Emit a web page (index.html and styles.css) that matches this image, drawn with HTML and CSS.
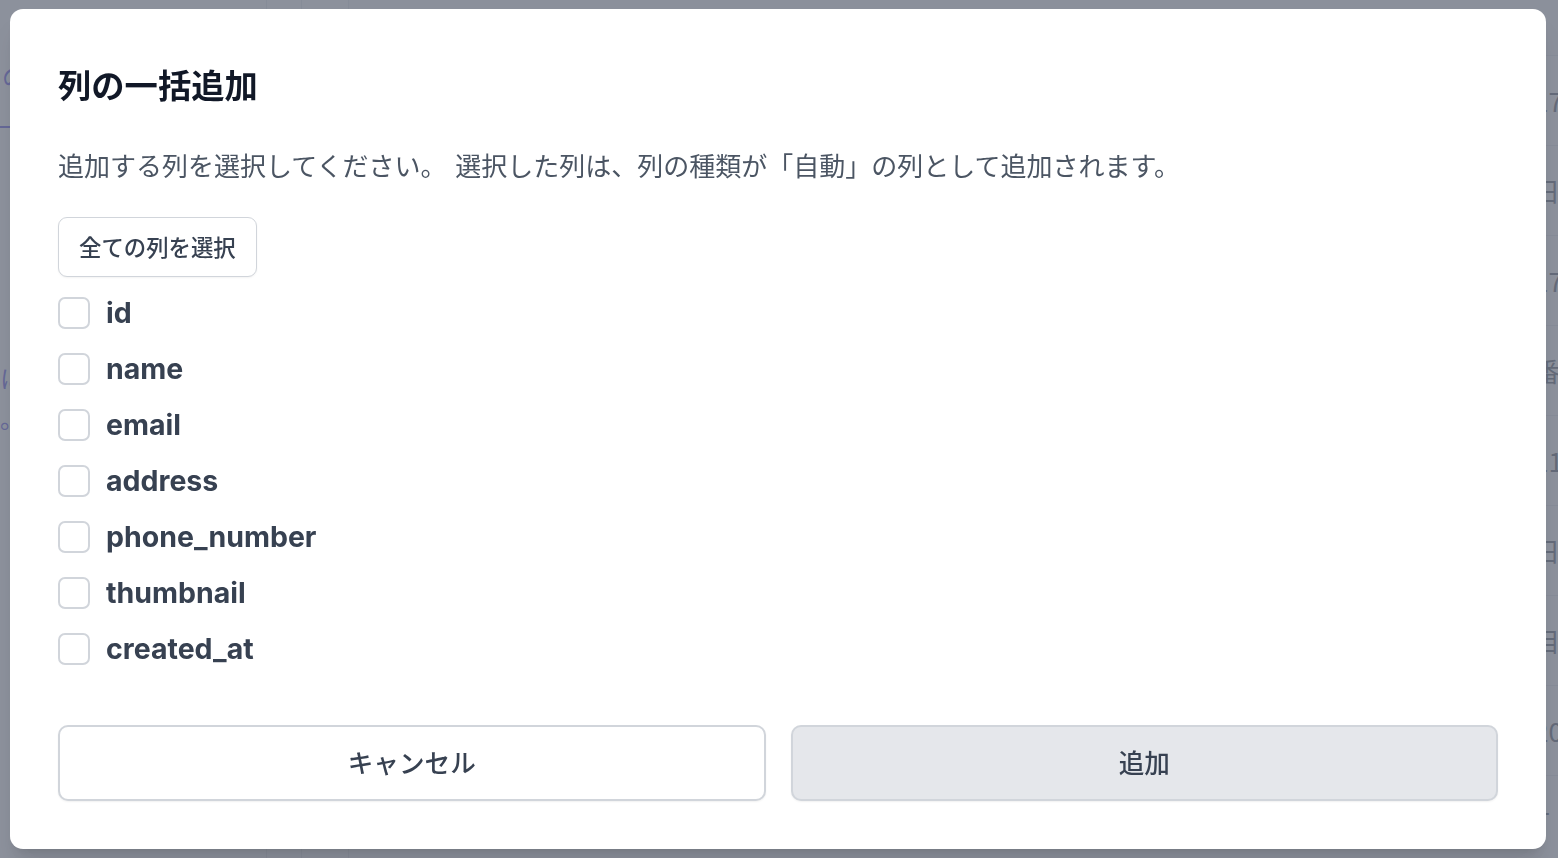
FILE: index.html
```html
<!DOCTYPE html>
<html lang="ja">
<head>
<meta charset="utf-8">
<title>列の一括追加</title>
<link rel="stylesheet" href="styles.css">
</head>
<body>
<div class="page">
  <aside class="side">
    <div class="side-tab">の</div>
    <div class="side-note">に</div>
    <div class="side-note small">。</div>
  </aside>
  <div class="col col-a"></div>
  <div class="col col-b"></div>
  <main class="table">
    <div class="row head"></div>
    <div class="row"><span class="cell-end">17</span></div>
    <div class="row"><span class="cell-end">日本</span></div>
    <div class="row"><span class="cell-end">17</span></div>
    <div class="row"><span class="cell-end">番号</span></div>
    <div class="row"><span class="cell-end">11</span></div>
    <div class="row"><span class="cell-end">日1</span></div>
    <div class="row"><span class="cell-end">目</span></div>
    <div class="row"><span class="cell-end">20</span></div>
    <div class="row"><span class="cell-end">T</span></div>
  </main>
</div>
<div class="overlay"></div>
<div class="modal" role="dialog">
  <h2 class="title">列の一括追加</h2>
  <p class="desc">追加する列を選択してください。 選択した列は、列の種類が「自動」の列として追加されます。</p>
  <div class="select-all-wrap"><button class="select-all">全ての列を選択</button></div>
  <ul class="cols">
    <li class="col-item"><span class="box"></span><span class="label">id</span></li>
    <li class="col-item"><span class="box"></span><span class="label">name</span></li>
    <li class="col-item"><span class="box"></span><span class="label">email</span></li>
    <li class="col-item"><span class="box"></span><span class="label">address</span></li>
    <li class="col-item"><span class="box"></span><span class="label">phone_number</span></li>
    <li class="col-item"><span class="box"></span><span class="label">thumbnail</span></li>
    <li class="col-item"><span class="box"></span><span class="label">created_at</span></li>
  </ul>
  <div class="footer">
    <button class="btn btn-cancel">キャンセル</button>
    <button class="btn btn-add">追加</button>
  </div>
</div>
</body>
</html>
```

FILE: styles.css
```css
* { box-sizing: border-box; }
html, body { margin: 0; padding: 0; }
body {
  font-family: "Inter", "Noto Sans CJK JP", sans-serif;
  background: #ffffff;
  width: 1558px;
  height: 858px;
  overflow: hidden;
}

/* page behind the dialog */
.page {
  display: grid;
  grid-template-columns: 267px 35px 47px 1fr;
  height: 858px;
  color: #374151;
}
.side { border-right: 1px solid #e5e7eb; font-family: "Noto Sans CJK JP", sans-serif; }
.side-tab {
  color: #4f46e5;
  font-size: 24px;
  line-height: 32px;
  padding: 60px 0 34px 2px;
  border-bottom: 2px solid #4f46e5;
}
.side-note { color: #4f46e5; font-size: 24px; line-height: 36px; padding-left: 0; margin-top: 232px; }
.side-note.small { margin-top: 4px; }
.col { border-right: 1px solid #e5e7eb; }
.table { display: flex; flex-direction: column; }
.row {
  height: 90px;
  border-bottom: 1px solid #e5e7eb;
  display: flex;
  align-items: center;
  justify-content: flex-end;
  font-family: "Noto Sans CJK JP", sans-serif;
  font-size: 26px;
}
.row.head { height: 56px; background: #f9fafb; }
.cell-end { width: 24px; white-space: nowrap; overflow: hidden; color: #4b5563; }

.overlay {
  position: fixed;
  inset: 0;
  background: rgba(107, 114, 128, 0.78);
}

/* dialog */
.modal {
  position: fixed;
  left: 10px;
  top: 9px;
  width: 1536px;
  height: 840px;
  background: #ffffff;
  border-radius: 13px;
  padding: 55px 48px 48px;
  display: flex;
  flex-direction: column;
  box-shadow: 0 20px 25px -5px rgba(0,0,0,0.1), 0 8px 10px -6px rgba(0,0,0,0.1);
}
.title {
  margin: 0;
  font-family: "Noto Sans CJK JP", sans-serif;
  font-size: 33.3px;
  line-height: 40px;
  font-weight: 600;
  color: #111827;
}
.desc {
  margin: 41px 0 0;
  font-family: "Noto Sans CJK JP", sans-serif;
  font-size: 26px;
  line-height: 40px;
  word-spacing: 3px;
  color: #4b5563;
}
.select-all-wrap { margin-top: 32px; display: flex; }
.select-all {
  height: 60px;
  padding: 0 20px 2px;
  border: 1.6px solid #d1d5db;
  border-radius: 9px;
  background: #ffffff;
  font-family: "Noto Sans CJK JP", sans-serif;
  font-size: 22.4px;
  font-weight: 500;
  color: #374151;
  box-shadow: 0 1px 2px rgba(0,0,0,0.05);
}
.cols {
  list-style: none;
  margin: 16px 0 0;
  padding: 0;
  display: flex;
  flex-direction: column;
  gap: 16px;
}
.col-item { display: flex; align-items: center; gap: 16px; height: 40px; }
.box {
  width: 32px;
  height: 32px;
  border: 2px solid #d1d5db;
  border-radius: 7px;
  background: #ffffff;
  flex: none;
}
.label {
  font-family: "Inter", sans-serif;
  font-size: 28.5px;
  line-height: 38px;
  font-weight: 700;
  color: #374151;
}
.footer {
  margin-top: auto;
  display: grid;
  grid-template-columns: 1fr 1fr;
  gap: 25px;
}
.btn {
  height: 76px;
  padding-bottom: 4px;
  border: 2px solid #d1d5db;
  border-radius: 10px;
  font-family: "Noto Sans CJK JP", sans-serif;
  font-size: 25.6px;
  font-weight: 500;
  color: #374151;
  box-shadow: 0 1px 2px rgba(0,0,0,0.06);
}
.btn-cancel { background: #ffffff; }
.btn-add { background: #e5e7eb; }
```
